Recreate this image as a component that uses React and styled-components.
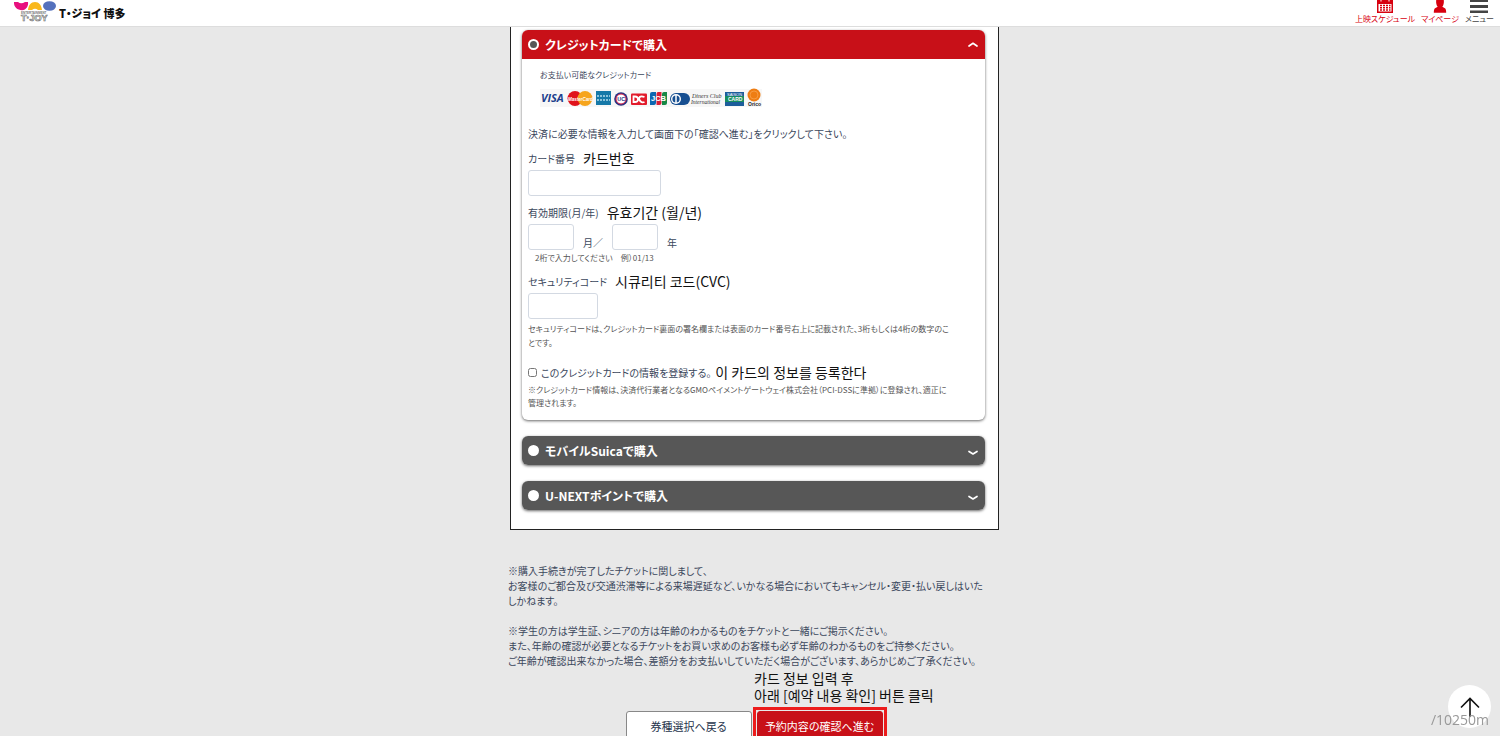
import React, { useState } from "react";
import styled, { createGlobalStyle } from "styled-components";

const GlobalStyle = createGlobalStyle`
  * {
    box-sizing: border-box;
  }
  body {
    margin: 0;
    background: #e8e8e8;
    color: #3b475c;
    font-family: "Noto Sans CJK JP", sans-serif;
    font-size: 10px;
    line-height: 15px;
    font-feature-settings: "palt";
  }
  p {
    margin: 0;
  }
  button,
  input {
    font: inherit;
  }
`;

const methods = [
  { id: "credit", title: "クレジットカードで購入" },
  { id: "suica", title: "モバイルSuicaで購入" },
  { id: "unext", title: "U-NEXTポイントで購入" },
];

function SiteLogo() {
  return (
    <svg width="44" height="22" viewBox="0 0 44 22" aria-hidden="true">
      <path d="M1 2h4q3 2.500 7 0h3c.6 4-1.600 8-6 8.200C4.500 10.200.600 7 1 2z" fill="#e8107e" />
      <path d="M15 10C15.500 5 18 2 22 2s6.500 3 7 8h-4q-3-2.500-6 0z" fill="#f9b81c" />
      <ellipse cx="36.500" cy="6" rx="6.500" ry="4.800" fill="#5471bd" />
      <text x="8" y="14" fontSize="3" fontWeight="700" fontFamily="Liberation Sans" fill="#777">
        ENTERTAINMENT
      </text>
      <text
        x="8"
        y="20.500"
        fontSize="9"
        fontFamily="Liberation Sans"
        fill="#fff"
        stroke="#666"
        strokeWidth="0.6"
      >
        T·JOY
      </text>
    </svg>
  );
}

function CalendarIcon() {
  return (
    <svg width="18" height="14" viewBox="0 0 18 14" aria-hidden="true">
      <path d="M1 0h16v13H1z" fill="#d7000f" />
      <path d="M2.500 4h13v7.500h-13zM4.500 0h1v1.500h-1zM12.500 0h1v1.500h-1z" fill="#fff" />
      <path
        d="M4 4.700h2v1.500H4zM7 4.700h2v1.500H7zM10 4.700h2v1.500h-2zM13 4.700h1.500v1.500H13zM4 7h2v1.500H4zM7 7h2v1.500H7zM10 7h2v1.500h-2zM13 7h1.500v1.500H13zM4 9.300h2v1.500H4zM7 9.300h2v1.500H7zM10 9.300h2v1.500h-2zM13 9.300h1.500v1.500H13z"
        fill="#d7000f"
      />
    </svg>
  );
}

function PersonIcon() {
  return (
    <svg width="14" height="14" viewBox="0 0 14 14" aria-hidden="true">
      <path
        d="M3.200 0h7.600c.4 3-.4 5.600-1.500 6.800l2.200 1.200c1.200.6 1.700 2 1.700 4.700H.8c0-2.700.5-4.100 1.700-4.700l2.200-1.200C3.600 5.600 2.800 3 3.200 0z"
        fill="#d7000f"
      />
    </svg>
  );
}

function MenuIcon() {
  return (
    <svg width="18" height="14" viewBox="0 0 18 14" aria-hidden="true">
      <path d="M0 0h18v2H0zM0 5h18v3H0zM0 10.500h18v2.500H0z" fill="#444" />
    </svg>
  );
}

function Chevron({ open }) {
  return (
    <svg width="12" height="8" viewBox="0 0 12 8" aria-hidden="true">
      <path
        d={open ? "M2 5 6 2.300l4 2.700" : "M2 4.500 6 7l4-2.500"}
        fill="none"
        stroke="#fff"
        strokeWidth="1.700"
        strokeLinecap="round"
        strokeLinejoin="round"
      />
    </svg>
  );
}

function CardBrands() {
  return (
    <svg width="222" height="20" viewBox="0 0 222 20" role="img" aria-label="利用可能なカードブランド">
      <rect y="1" width="222" height="18" fill="#f7f7f7" />
      <text x="1" y="14" fontSize="11" fontWeight="700" fontStyle="italic" fontFamily="Open Sans" fill="#1c3f8c">
        VISA
      </text>
      <circle cx="35" cy="10.500" r="7.500" fill="#e0131b" />
      <circle cx="45" cy="10.500" r="7.500" fill="#f6a51d" />
      <text x="28" y="12.500" fontSize="4.500" fontWeight="700" fontStyle="italic" fontFamily="Liberation Sans" fill="#fff">
        MasterCard
      </text>
      <rect x="56" y="3" width="15" height="14" fill="#1679a8" />
      <path d="M57 8h13M57 12h13" stroke="#b4dcea" strokeWidth="1.500" strokeDasharray="2 1" />
      <circle cx="81" cy="11" r="6.800" fill="#243483" />
      <circle cx="81" cy="11" r="5" fill="#fff" stroke="#d71d47" strokeWidth="1" />
      <text x="77.200" y="13" fontSize="5.500" fontWeight="700" fontFamily="Liberation Sans" fill="#243483">
        UC
      </text>
      <rect x="91" y="5.500" width="16" height="11.500" rx="1" fill="#e21b2b" />
      <path d="M93.500 8.500h1.500c4 0 4 5.500 0 5.500h-1.500zM104.500 9c-5-2-6 1-5 3s3 3 5 2" fill="none" stroke="#fff" strokeWidth="1.800" />
      <path d="M112 4h4v11q0 2-2 2h-4V6q0-2 2-2z" fill="#0c67b1" />
      <path d="M118 4h3.500v11q0 2-2 2H116.500V6q0-2 1.500-2z" fill="#d81e36" />
      <path d="M124 4h3v11q0 2-2 2h-3V6q0-2 2-2z" fill="#168846" />
      <text x="111" y="13" fontSize="7.500" fontWeight="700" fontFamily="Liberation Sans" fill="#fff">
        JCB
      </text>
      <rect x="130" y="5" width="20" height="12" rx="6" fill="#174f91" />
      <circle cx="136" cy="11" r="5" fill="#fff" />
      <circle cx="136" cy="11" r="3.600" fill="#174f91" />
      <path d="M136 7v8" stroke="#fff" strokeWidth="1.500" />
      <text x="152" y="10" fontSize="6" fontStyle="italic" fontFamily="Liberation Serif" fill="#333">
        Diners Club
      </text>
      <text x="151" y="16" fontSize="5.500" fontStyle="italic" fontFamily="Liberation Serif" fill="#333">
        International
      </text>
      <rect x="185" y="4" width="19" height="14" fill="#168c60" />
      <path d="M185 4h19v4h-19zM185 14h19v4h-19z" fill="#1c5d9b" />
      <text x="187" y="8" fontSize="4" fontFamily="Liberation Sans" fill="#fff">
        SAISON
      </text>
      <text x="188" y="13" fontSize="5" fontWeight="700" fontFamily="Liberation Sans" fill="#fff">
        CARD
      </text>
      <circle cx="214" cy="7" r="6.500" fill="#ee7d13" />
      <circle cx="214" cy="7" r="4" fill="none" stroke="#f7a24c" strokeWidth="0.8" />
      <text x="208" y="18" fontSize="5" fontWeight="700" fontFamily="Liberation Sans" fill="#222">
        Orico
      </text>
    </svg>
  );
}

function CreditForm() {
  return (
    <PanelBody>
      <Brands>
        <p>お支払い可能なクレジットカード</p>
        <CardBrands />
      </Brands>
      <Lead>決済に必要な情報を入力して画面下の「確認へ進む」をクリックして下さい。</Lead>

      <Field>
        <FieldHead>
          <label htmlFor="card-number">カード番号</label>
          <Korean>카드번호</Korean>
        </FieldHead>
        <TextBox id="card-number" $width="133px" inputMode="numeric" />
      </Field>

      <Field>
        <FieldHead>
          <span>有効期限(月/年)</span>
          <Korean>유효기간 (월/년)</Korean>
        </FieldHead>
        <Expiry>
          <TextBox id="exp-month" $width="46px" maxLength={2} />
          <label htmlFor="exp-month">月／</label>
          <TextBox id="exp-year" $width="46px" maxLength={2} />
          <label htmlFor="exp-year">年</label>
        </Expiry>
        <Hint $indent>2桁で入力してください　例）01/13</Hint>
      </Field>

      <Field>
        <FieldHead>
          <label htmlFor="cvc">セキュリティコード</label>
          <Korean>시큐리티 코드(CVC)</Korean>
        </FieldHead>
        <TextBox id="cvc" $width="70px" maxLength={4} />
        <Hint $gap="3px">
          セキュリティコードは、クレジットカード裏面の署名欄または表面のカード番号右上に記載された、3桁もしくは4桁の数字のこ
          <br />
          とです。
        </Hint>
      </Field>

      <SaveRow>
        <input id="save-card" type="checkbox" />
        <label htmlFor="save-card">このクレジットカードの情報を登録する。</label>
        <Korean>이 카드의 정보를 등록한다</Korean>
      </SaveRow>
      <Hint $tight>
        ※クレジットカード情報は、決済代行業者となるGMOペイメントゲートウェイ株式会社（PCI-DSSに準拠）に登録され、適正に
        <br />
        管理されます。
      </Hint>
    </PanelBody>
  );
}

export default function App() {
  const [selected, setSelected] = useState("credit");

  return (
    <Page>
      <GlobalStyle />
      <Header>
        <Brand href="#">
          <SiteLogo />
          T・ジョイ 博多
        </Brand>
        <Nav>
          <NavLink href="#schedule">
            <CalendarIcon />
            上映スケジュール
          </NavLink>
          <NavLink href="#mypage">
            <PersonIcon />
            マイページ
          </NavLink>
          <MenuButton type="button">
            <MenuIcon />
            メニュー
          </MenuButton>
        </Nav>
      </Header>

      <Main>
        <Frame>
          {methods.map(({ id, title }) => {
            const open = id === selected;
            return (
              <Panel key={id}>
                <PanelHead $open={open}>
                  <input
                    type="radio"
                    name="method"
                    checked={open}
                    onChange={() => setSelected(id)}
                  />
                  <span>{title}</span>
                  <Chevron open={open} />
                </PanelHead>
                {open && id === "credit" && <CreditForm />}
              </Panel>
            );
          })}
        </Frame>

        <Notes>
          <p>
            ※購入手続きが完了したチケットに関しまして、
            <br />
            お客様のご都合及び交通渋滞等による来場遅延など、いかなる場合においてもキャンセル・変更・払い戻しはいた
            <br />
            しかねます。
          </p>
          <p>
            ※学生の方は学生証、シニアの方は年齢のわかるものをチケットと一緒にご掲示ください。
            <br />
            また、年齢の確認が必要となるチケットをお買い求めのお客様も必ず年齢のわかるものをご持参ください。
            <br />
            ご年齢が確認出来なかった場合、差額分をお支払いしていただく場合がございます、あらかじめご了承ください。
          </p>
        </Notes>

        <Guide>
          카드 정보 입력 후<br />
          아래 [예약 내용 확인] 버튼 클릭
        </Guide>
        <Actions>
          <ActionButton type="button">券種選択へ戻る</ActionButton>
          <Highlight>
            <ActionButton type="button" $primary>
              予約内容の確認へ進む
            </ActionButton>
          </Highlight>
        </Actions>
      </Main>

      <TopButton type="button" aria-label="ページの先頭へ">
        <svg width="20" height="20" viewBox="0 0 20 20" aria-hidden="true">
          <path d="M1 10.500 10 1.500l9 9M10 1.500V20" fill="none" stroke="#111" strokeWidth="1.600" />
        </svg>
      </TopButton>
      <Distance>/10250m</Distance>
    </Page>
  );
}

const Page = styled.div`
  height: 100vh;
  overflow: hidden;
`;

const Header = styled.header`
  display: flex;
  justify-content: space-between;
  height: 27px;
  padding: 0 6px 0 13px;
  background: #fff;
  border-bottom: 1px solid #ddd;
`;

const Brand = styled.a`
  display: flex;
  align-items: center;
  gap: 2px;
  color: #111;
  font-size: 11px;
  font-weight: 900;
  text-decoration: none;
  svg {
    align-self: flex-start;
  }
`;

const Nav = styled.nav`
  display: flex;
  gap: 6px;
  color: #d7000f;
  font-size: 8px;
  line-height: 10px;
`;

const NavLink = styled.a`
  display: flex;
  flex-direction: column;
  align-items: center;
  color: inherit;
  text-decoration: none;
`;

const MenuButton = styled.button`
  display: flex;
  flex-direction: column;
  align-items: center;
  padding: 0;
  border: 0;
  background: none;
  color: #444;
`;

const Main = styled.main`
  width: 100%;
  max-width: 500px;
  margin: 0 auto;
  padding-left: 8px;
`;

const Frame = styled.section`
  display: flex;
  flex-direction: column;
  gap: 16px;
  margin: 0 1px 0 2px;
  padding: 3px 13px 19px 11px;
  background: #fff;
  border: 1px solid #222;
  border-top: 0;
`;

const Panel = styled.div`
  border-radius: 6px;
  background: #fff;
  box-shadow: 0 1px 3px rgba(0, 0, 0, 0.6);
`;

const PanelHead = styled.label`
  display: flex;
  align-items: center;
  gap: 6px;
  height: 29px;
  padding: 0 6px;
  border-radius: ${({ $open }) => ($open ? "6px 6px 0 0" : "6px")};
  background: ${({ $open }) => ($open ? "#c81018" : "#575757")};
  color: #fff;
  font-size: 12px;
  font-weight: 700;
  input {
    appearance: none;
    width: 11px;
    height: 11px;
    margin: 0;
    border: 2px solid #fff;
    border-radius: 50%;
    background: ${({ $open }) => ($open ? "#575757" : "#fff")};
  }
  span {
    flex: 1;
  }
`;

const PanelBody = styled.div`
  padding: 8px 6px 11px;
`;

const Brands = styled.div`
  padding-left: 12px;
  font-size: 8px;
  line-height: 16px;
  svg {
    display: block;
    margin-top: 5px;
  }
`;

const Lead = styled.p`
  margin-top: 18px;
  line-height: 16px;
`;

const Field = styled.div`
  margin-top: 6px;
`;

const FieldHead = styled.div`
  display: flex;
  align-items: center;
  gap: 8px;
  height: 20px;
  margin-bottom: 2px;
`;

const Korean = styled.span`
  color: #111;
  font-family: "Noto Sans CJK KR", sans-serif;
  font-size: 14px;
  font-feature-settings: normal;
  line-height: 17px;
`;

const TextBox = styled.input`
  display: block;
  width: ${({ $width }) => $width};
  height: 26px;
  padding: 2px 6px;
  border: 1px solid #d3d9e2;
  border-radius: 3px;
  background: #fff;
`;

const Expiry = styled.div`
  display: flex;
  align-items: flex-end;
  gap: 9px;
`;

const Hint = styled.p`
  margin-top: ${({ $gap }) => $gap || "1px"};
  padding-left: ${({ $indent }) => ($indent ? "7px" : "0")};
  color: #555;
  font-size: 8px;
  line-height: ${({ $tight }) => ($tight ? "13px" : "14px")};
`;

const SaveRow = styled.div`
  display: flex;
  align-items: center;
  gap: 4px;
  height: 20px;
  margin-top: 12px;
  input {
    width: 9px;
    height: 9px;
    margin: 0;
  }
`;

const Notes = styled.section`
  display: grid;
  gap: 15px;
  margin-top: 33px;
`;

const Guide = styled(Korean)`
  display: block;
  margin: 2px 0 0 50%;
`;

const Actions = styled.div`
  display: flex;
  justify-content: center;
  align-items: center;
  gap: 1px;
  margin-top: 3px;
  padding-left: 4px;
`;

const ActionButton = styled.button`
  display: block;
  width: 126px;
  height: 31px;
  padding: 0;
  border: 1px solid ${({ $primary }) => ($primary ? "#c81018" : "#888")};
  border-radius: 3px;
  background: ${({ $primary }) => ($primary ? "#c81018" : "#fff")};
  color: ${({ $primary }) => ($primary ? "#fff" : "#26344c")};
  font-size: 11px;
`;

const Highlight = styled.div`
  padding: 1px;
  border: 3px solid #ec1c1c;
`;

const TopButton = styled.button`
  position: fixed;
  right: 9px;
  bottom: 8px;
  display: flex;
  align-items: center;
  justify-content: center;
  width: 43px;
  height: 43px;
  padding: 0;
  border: 0;
  border-radius: 50%;
  background: #fff;
`;

const Distance = styled.span`
  position: fixed;
  right: 11px;
  bottom: 6px;
  color: #999;
  font-family: "Open Sans", sans-serif;
  font-size: 14px;
  line-height: 20px;
`;
